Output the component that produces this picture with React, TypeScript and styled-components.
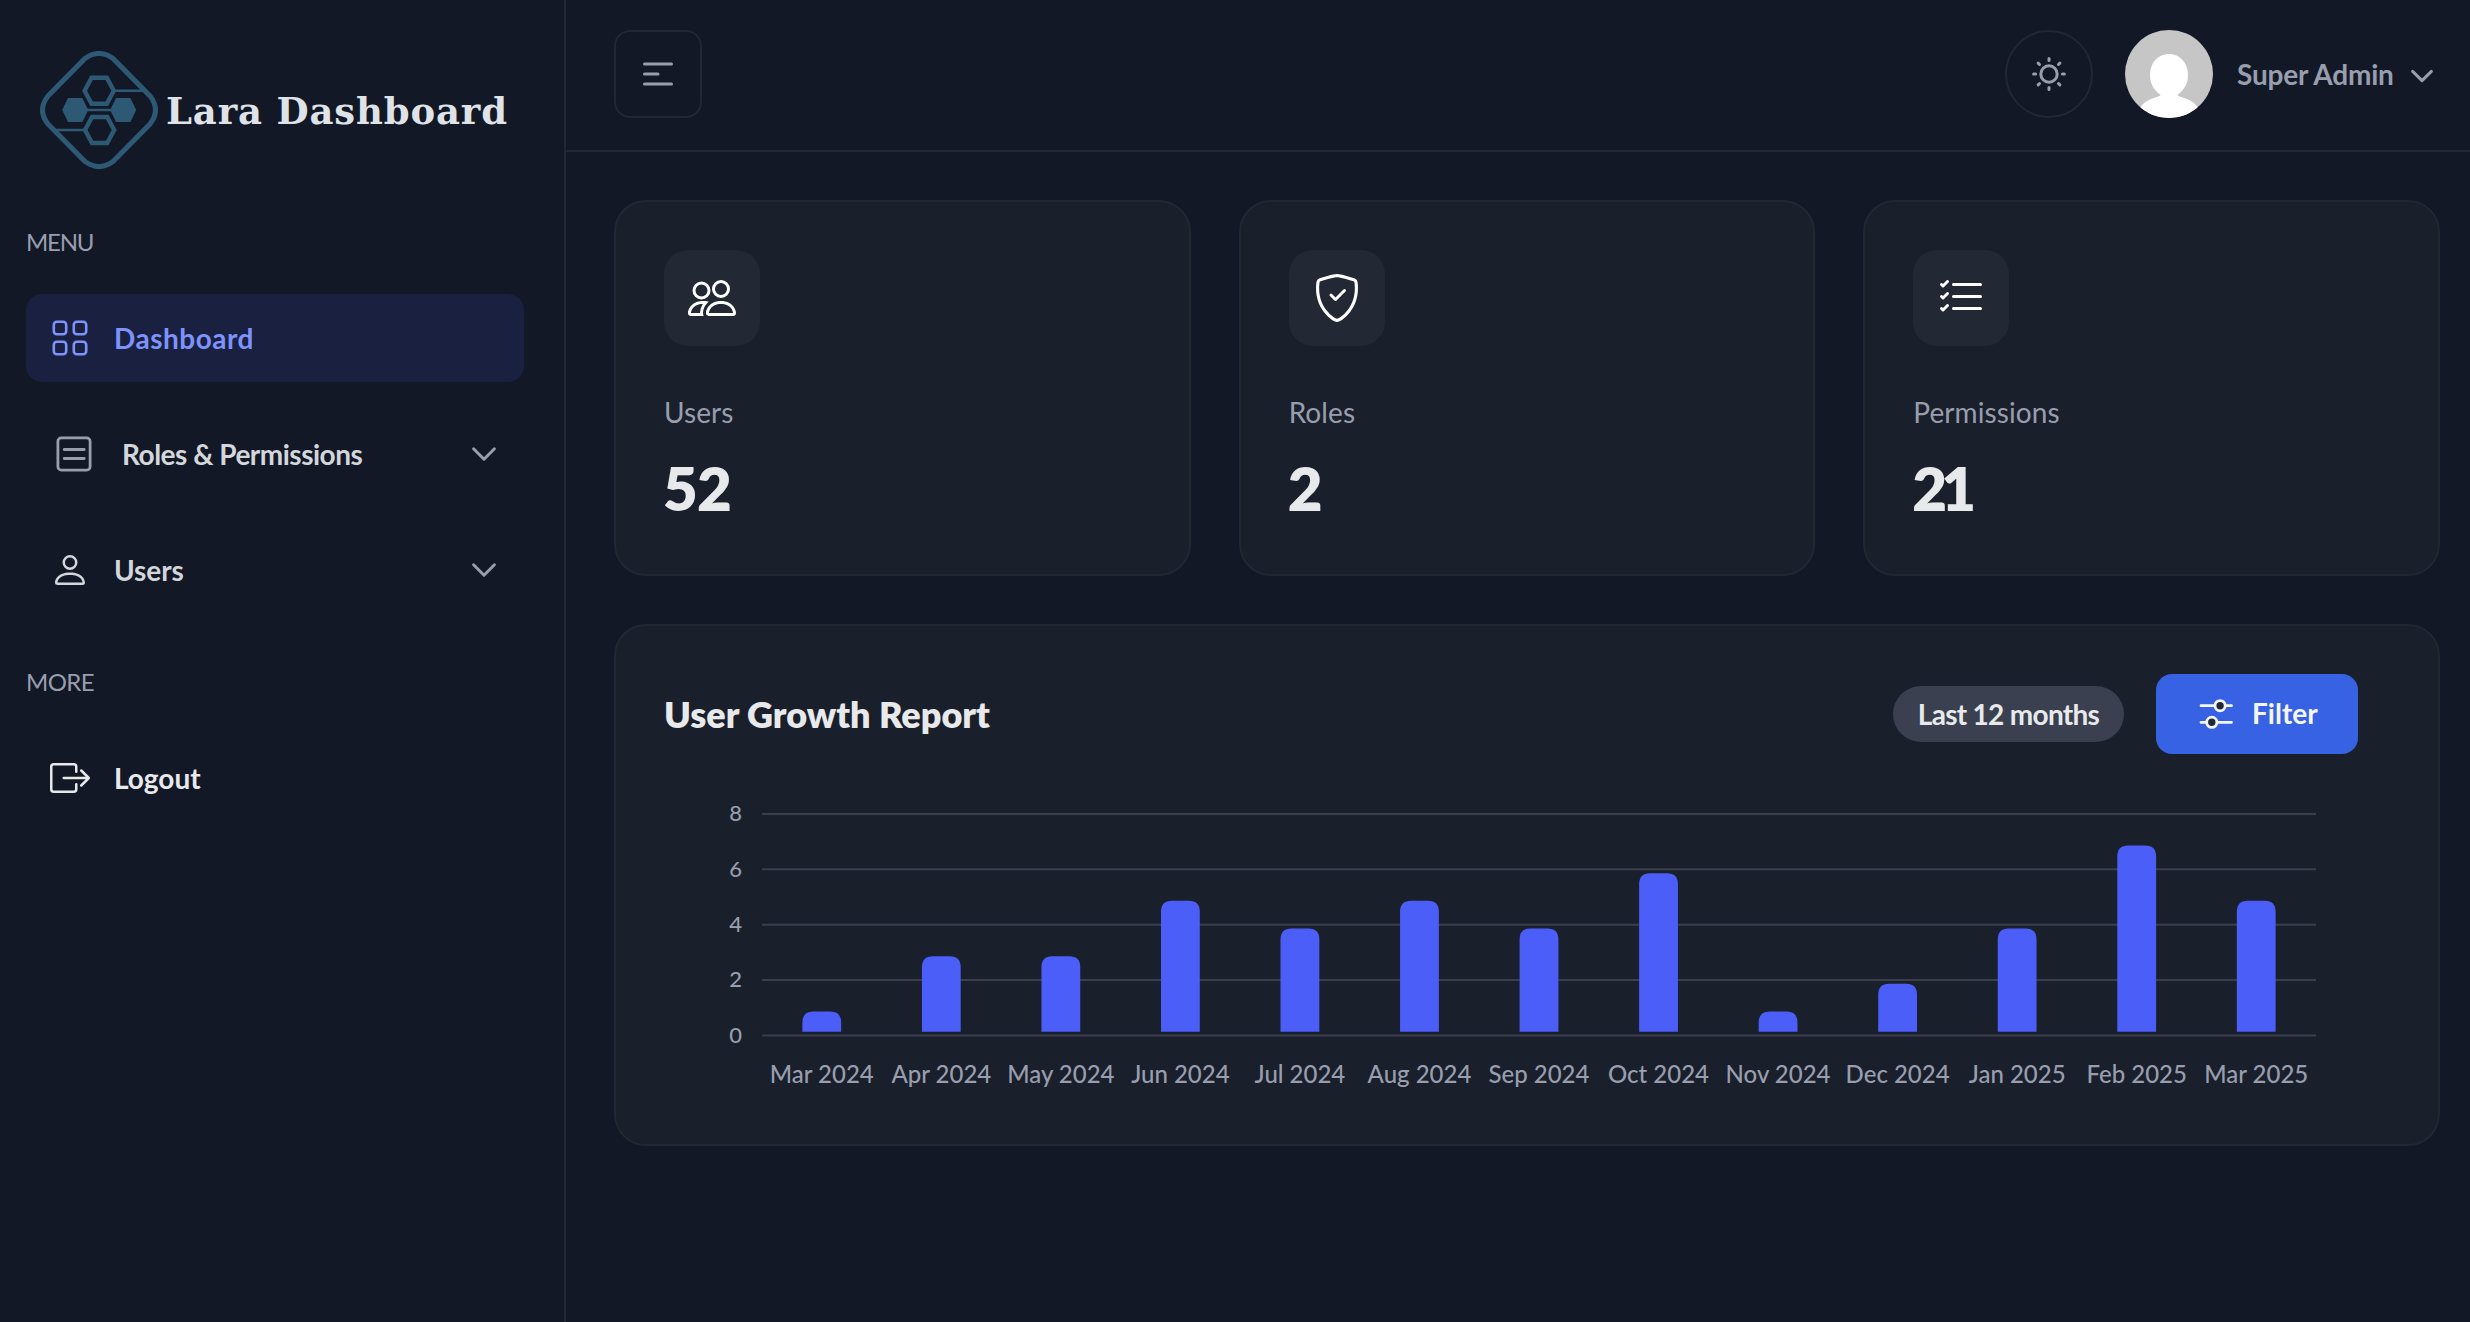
import React from "react";
import styled, { createGlobalStyle } from "styled-components";
import { BsPerson, BsPeople, BsShieldCheck, BsListCheck, BsBoxArrowRight } from "react-icons/bs";

const colors = {
  page: "#121826",
  card: "#1a1f2c",
  line: "#212733",
  tile: "#222834",
  muted: "#989eae",
  text: "#e8e9eb",
  item: "#d3d6db",
  brand: "#7d92fb",
  activeBg: "#1a203f",
  button: "#3862e4",
  bar: "#4b5ff8",
};

const GlobalStyle = createGlobalStyle`
  *, *::before, *::after { box-sizing: border-box; }
  body {
    margin: 0;
    background: ${colors.page};
    color: ${colors.text};
    font-family: Lato, "Open Sans", sans-serif;
  }
  svg { display: block; flex: none; }
  h2, p { margin: 0; }
`;

const Shell = styled.div`
  display: flex;
  width: 100%;
  height: 1322px;
  overflow: hidden;
`;

/* Sidebar */

const Sidebar = styled.aside`
  flex: none;
  width: 566px;
  padding: 51px 40px 0 26px;
  border-right: 2px solid ${colors.line};
`;

const Brand = styled.div`
  display: flex;
  align-items: center;
  gap: 8px;
  height: 118px;
  padding-left: 14px;
  color: #2e5975;
`;

const BrandName = styled.span`
  padding-top: 3px;
  font: 700 37px/1.2 "DejaVu Serif", serif;
  letter-spacing: 0.85px;
  color: #dfe2e6;
  white-space: nowrap;
`;

const GroupTitle = styled.h3<{ $top: number; $spacing: number }>`
  margin: ${(p) => p.$top}px 0 34px;
  font-size: 24px;
  font-weight: 400;
  line-height: 36px;
  letter-spacing: ${(p) => p.$spacing}px;
  color: ${colors.muted};
`;

const Menu = styled.nav`
  display: flex;
  flex-direction: column;
  gap: 28px;
`;

const MenuItem = styled.a<{ $active?: boolean; $bright?: boolean }>`
  display: flex;
  align-items: center;
  height: 88px;
  padding-right: 20px;
  border-radius: 16px;
  background: ${(p) => (p.$active ? colors.activeBg : "transparent")};
  color: ${(p) => (p.$active ? colors.brand : p.$bright ? colors.text : colors.item)};
`;

const IconSlot = styled.span<{ $wide?: boolean }>`
  display: flex;
  justify-content: center;
  width: ${(p) => (p.$wide ? 96 : 88)}px;
`;

const MenuLabel = styled.span<{ $spacing: number }>`
  flex: 1;
  padding-bottom: 1px;
  font-size: 28px;
  font-weight: 700;
  letter-spacing: ${(p) => p.$spacing}px;
  white-space: nowrap;
`;

/* Main column */

const Main = styled.div`
  flex: 1;
  min-width: 0;
  display: flex;
  flex-direction: column;
`;

const Header = styled.header`
  display: flex;
  align-items: center;
  height: 152px;
  padding: 0 30px 2px 48px;
  border-bottom: 2px solid ${colors.line};
`;

const IconButton = styled.button<{ $round?: boolean }>`
  display: grid;
  place-items: center;
  width: 88px;
  height: 88px;
  padding: 0;
  border: 2px solid ${colors.line};
  border-radius: ${(p) => (p.$round ? "50%" : "16px")};
  background: none;
  color: ${colors.muted};
`;

const HeaderTools = styled.div`
  display: flex;
  align-items: center;
  gap: 32px;
  margin-left: auto;
`;

const Profile = styled.div`
  display: flex;
  align-items: center;
  color: ${colors.muted};
`;

const ProfileName = styled.span`
  width: 159px;
  margin: 0 8px 0 24px;
  padding-bottom: 1px;
  font-size: 28px;
  font-weight: 700;
  letter-spacing: -0.2px;
  white-space: nowrap;
`;

const Content = styled.main`
  display: flex;
  flex-direction: column;
  gap: 48px;
  padding: 48px 30px 0 48px;
`;

const StatGrid = styled.section`
  display: grid;
  grid-template-columns: repeat(3, 1fr);
  gap: 48px;
`;

const Card = styled.article`
  padding: 48px;
  border: 2px solid ${colors.line};
  border-radius: 32px;
  background: ${colors.card};
`;

const StatCard = styled(Card)`
  height: 376px;
`;

const StatTile = styled.div`
  display: grid;
  place-items: center;
  width: 96px;
  height: 96px;
  border-radius: 24px;
  background: ${colors.tile};
  color: #fff;
`;

const StatLabel = styled.p`
  margin-top: 46px;
  font-size: 28px;
  line-height: 40px;
  letter-spacing: 0.08px;
  color: ${colors.muted};
`;

const StatValue = styled.p<{ $spacing: number }>`
  margin-top: 18px;
  font-size: 60px;
  font-weight: 800;
  line-height: 76px;
  letter-spacing: ${(p) => p.$spacing}px;
  text-indent: -1px;
`;

const ReportCard = styled(Card)`
  height: 522px;
`;

const ReportHeader = styled.div`
  display: flex;
  align-items: center;
  height: 80px;
  padding-right: 32px;
`;

const ReportTitle = styled.h2`
  flex: 1;
  padding-bottom: 1px;
  font-size: 36px;
  font-weight: 800;
  letter-spacing: 0;
`;

const Badge = styled.span`
  display: flex;
  align-items: center;
  justify-content: center;
  width: 231px;
  height: 56px;
  margin-right: 32px;
  padding-bottom: 1px;
  border-radius: 28px;
  background: #3a404f;
  font-size: 28px;
  font-weight: 700;
  letter-spacing: -0.7px;
`;

const FilterButton = styled.button`
  display: flex;
  align-items: center;
  gap: 16px;
  width: 202px;
  height: 80px;
  padding: 0 0 0 40px;
  border: 0;
  border-radius: 16px;
  background: ${colors.button};
  color: #f4f6fb;
  font: 700 28px/1.2 Lato, "Open Sans", sans-serif;
`;

/* Icons */

const hex = (cx: number, cy: number, w: number, f: number, h: number) =>
  `M${cx - w} ${cy}L${cx - f} ${cy - h}H${cx + f}L${cx + w} ${cy}L${cx + f} ${cy + h}H${cx - f}Z`;

const BrandMark = () => (
  <svg width="118" height="118" viewBox="-59 -59 118 118" fill="none" stroke="currentColor">
    <path
      strokeWidth="5"
      d="M-14 -51.5Q0 -61.5 14 -51.5L51 -14Q62 0 51 14L14 51.5Q0 61.5 -14 51.5L-51 14Q-62 0 -51 -14Z"
    />
    <path strokeWidth="4.4" d={hex(0.2, -19.3, 14.6, 7.6, 13)} />
    <path strokeWidth="4.4" d={hex(0.6, 20, 14.6, 7.6, 13)} />
    <path fill="currentColor" stroke="none" d={hex(-23.8, 0, 13, 7.2, 12)} />
    <path fill="currentColor" stroke="none" d={hex(24.2, 0, 13, 7.2, 12)} />
    <path strokeWidth="2.6" d="M-14 0H14M16 -19.3H46M-45 20H-15" />
  </svg>
);

const GridIcon = () => (
  <svg width="48" height="48" viewBox="0 0 24 24" fill="none" stroke="currentColor" strokeWidth="1.3">
    {[3.9, 13.9].map((x) =>
      [3.9, 13.9].map((y) => <rect key={`${x}-${y}`} x={x} y={y} width="6.2" height="6.2" rx="1.5" />)
    )}
  </svg>
);

const ListIcon = () => (
  <svg width="48" height="48" viewBox="0 0 24 24" fill="none" stroke={colors.muted} strokeWidth="1.4" strokeLinecap="round">
    <rect x="3.95" y="3.95" width="16.1" height="16.1" rx="1.7" />
    <path d="M7.1 9.75H17.1M7.1 14.25H17.1" />
  </svg>
);

const Chevron = () => (
  <svg width="40" height="40" viewBox="0 0 20 20" fill="none" stroke={colors.muted} strokeWidth="1.5" strokeLinecap="round" strokeLinejoin="round">
    <path d="M4.79 7.4L10 12.6L15.21 7.4" />
  </svg>
);

const ProfileChevron = () => (
  <svg width="36" height="40" viewBox="0 0 18 20" fill="none" stroke="currentColor" strokeWidth="1.5" strokeLinecap="round" strokeLinejoin="round">
    <path d="M4.31 8.66L9 13.34L13.69 8.66" />
  </svg>
);

const MenuIcon = () => (
  <svg width="32" height="24" viewBox="0 0 32 24" fill="none" stroke="currentColor" strokeWidth="3" strokeLinecap="round">
    <path d="M2.5 2H29.5M2.5 12H16M2.5 22H29.5" />
  </svg>
);

const SunIcon = () => (
  <svg width="40" height="40" viewBox="-20 -20 40 40" fill="none" stroke="currentColor" strokeWidth="3" strokeLinecap="round">
    <circle r="8.2" />
    {[0, 45, 90, 135, 180, 225, 270, 315].map((a) => (
      <path key={a} d="M0 -13.4V-15.4" transform={`rotate(${a})`} />
    ))}
  </svg>
);

const Avatar = () => (
  <svg width="88" height="88" viewBox="0 0 88 88">
    <clipPath id="avatar-clip">
      <circle cx="44" cy="44" r="44" />
    </clipPath>
    <g clipPath="url(#avatar-clip)">
      <path fill="#c6c6c6" d="M0 0H88V88H0Z" />
      <path
        fill="#fff"
        d="M44 24C55 24 63 33 63 45C63 54 59 60 52.5 65C54 67 58 67.3 62 69C67 71 71 74 73 78L78 88H10L15 78C17 74 21 71 26 69C30 67.3 34 67 35.5 65C29 60 25 54 25 45C25 33 33 24 44 24Z"
      />
    </g>
  </svg>
);

const FilterIcon = () => (
  <svg width="40" height="40" viewBox="0 0 40 40" fill="#1f2937" stroke="#f4f6fb" strokeWidth="2.8" strokeLinecap="round">
    <path d="M5 11.7H35.5M5 28.3H35.5" />
    <circle cx="24.1" cy="11.7" r="5.1" />
    <circle cx="15.8" cy="28.3" r="5.1" />
  </svg>
);

/* Chart */

const growth: [string, number][] = [
  ["Mar 2024", 1],
  ["Apr 2024", 3],
  ["May 2024", 3],
  ["Jun 2024", 5],
  ["Jul 2024", 4],
  ["Aug 2024", 5],
  ["Sep 2024", 4],
  ["Oct 2024", 6],
  ["Nov 2024", 1],
  ["Dec 2024", 2],
  ["Jan 2025", 4],
  ["Feb 2025", 7],
  ["Mar 2025", 5],
];

const plot = { left: 98, right: 1652, top: 60, bottom: 281.4 };
const unit = (plot.bottom - plot.top) / 8;
const band = (plot.right - plot.left) / growth.length;

const ChartSvg = styled.svg`
  font-family: Lato, "Open Sans", sans-serif;
`;

const AxisText = styled.text<{ $size: number }>`
  font-size: ${(p) => p.$size}px;
  font-weight: 500;
  fill: ${colors.muted};
`;

const barPath = (cx: number, value: number) => {
  const half = 19.4;
  const r = 11;
  const top = plot.bottom - value * unit + 3.8;
  const base = plot.bottom - 3.7;
  return `M${cx - half} ${base}V${top + r}Q${cx - half} ${top} ${cx - half + r} ${top}H${cx + half - r}Q${cx + half} ${top} ${cx + half} ${top + r}V${base}Z`;
};

const GrowthChart = () => (
  <ChartSvg width="1726" height="342" viewBox="0 0 1726 342">
    {[8, 6, 4, 2, 0].map((tick) => {
      const y = plot.bottom - tick * unit;
      return (
        <g key={tick}>
          <path d={`M${plot.left} ${y}H${plot.right}`} stroke="#393f4d" strokeWidth="2" />
          <AxisText $size={22} x="78" y={y + 7.3} textAnchor="end">
            {tick}
          </AxisText>
        </g>
      );
    })}
    {growth.map(([month, value], i) => {
      const cx = plot.left + band * (i + 0.5);
      return (
        <g key={month}>
          <path d={barPath(cx, value)} fill={colors.bar} />
          <AxisText $size={24} x={cx} y="328.7" textAnchor="middle">
            {month}
          </AxisText>
        </g>
      );
    })}
  </ChartSvg>
);

const stats = [
  { label: "Users", value: "52", spacing: -0.8, icon: <BsPeople size={48} /> },
  { label: "Roles", value: "2", spacing: 0, icon: <BsShieldCheck size={48} /> },
  { label: "Permissions", value: "21", spacing: -6, icon: <BsListCheck size={48} /> },
];

export default function App() {
  return (
    <>
      <GlobalStyle />
      <Shell>
        <Sidebar>
          <Brand>
            <BrandMark />
            <BrandName>Lara Dashboard</BrandName>
          </Brand>

          <GroupTitle $top={55} $spacing={-1.2}>MENU</GroupTitle>
          <Menu>
            <MenuItem $active>
              <IconSlot><GridIcon /></IconSlot>
              <MenuLabel $spacing={0.5}>Dashboard</MenuLabel>
            </MenuItem>
            <MenuItem>
              <IconSlot $wide><ListIcon /></IconSlot>
              <MenuLabel $spacing={-0.5}>Roles &amp; Permissions</MenuLabel>
              <Chevron />
            </MenuItem>
            <MenuItem>
              <IconSlot><BsPerson size={40} /></IconSlot>
              <MenuLabel $spacing={-0.1}>Users</MenuLabel>
              <Chevron />
            </MenuItem>
          </Menu>

          <GroupTitle $top={50} $spacing={-0.6}>MORE</GroupTitle>
          <Menu>
            <MenuItem $bright>
              <IconSlot><BsBoxArrowRight size={40} /></IconSlot>
              <MenuLabel $spacing={0}>Logout</MenuLabel>
            </MenuItem>
          </Menu>
        </Sidebar>

        <Main>
          <Header>
            <IconButton aria-label="Toggle sidebar"><MenuIcon /></IconButton>
            <HeaderTools>
              <IconButton $round aria-label="Toggle theme"><SunIcon /></IconButton>
              <Profile>
                <Avatar />
                <ProfileName>Super Admin</ProfileName>
                <ProfileChevron />
              </Profile>
            </HeaderTools>
          </Header>

          <Content>
            <StatGrid>
              {stats.map((s) => (
                <StatCard key={s.label}>
                  <StatTile>{s.icon}</StatTile>
                  <StatLabel>{s.label}</StatLabel>
                  <StatValue $spacing={s.spacing}>{s.value}</StatValue>
                </StatCard>
              ))}
            </StatGrid>

            <ReportCard>
              <ReportHeader>
                <ReportTitle>User Growth Report</ReportTitle>
                <Badge>Last 12 months</Badge>
                <FilterButton>
                  <FilterIcon />
                  <span>Filter</span>
                </FilterButton>
              </ReportHeader>
              <GrowthChart />
            </ReportCard>
          </Content>
        </Main>
      </Shell>
    </>
  );
}
